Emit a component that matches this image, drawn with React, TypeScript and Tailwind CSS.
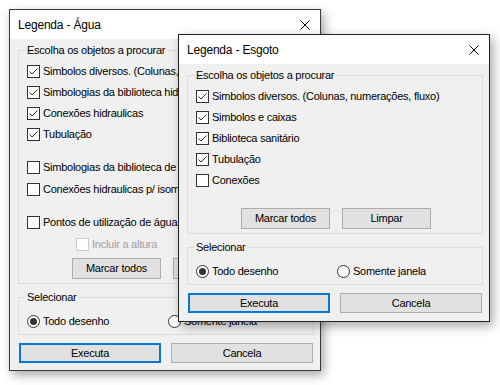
import type { ReactNode } from "react";

function CloseIcon() {
  return (
    <svg width="10" height="10" viewBox="0 0 10 10" className="block">
      <path d="M0.5 0.5 L9.5 9.5 M9.5 0.5 L0.5 9.5" stroke="#000" strokeWidth="1" fill="none" />
    </svg>
  );
}

function Check({
  label,
  checked = false,
  disabled = false,
}: {
  label: string;
  checked?: boolean;
  disabled?: boolean;
}) {
  return (
    <div className="flex h-[21px] items-center gap-[3px] whitespace-nowrap">
      <span
        className={`flex h-[13px] w-[13px] shrink-0 items-center justify-center border bg-white ${
          disabled ? "border-[#cccccc]" : "border-[#333333]"
        }`}
      >
        {checked && (
          <svg width="11" height="11" viewBox="0 0 11 11" className="block">
            <path d="M1.5 5.5 L4 8 L9.5 2.5" stroke="#333333" strokeWidth="1" fill="none" />
          </svg>
        )}
      </span>
      <span className={disabled ? "text-[#a0a0a0]" : "text-black"}>{label}</span>
    </div>
  );
}

function Radio({ label, checked = false }: { label: string; checked?: boolean }) {
  return (
    <div className="flex h-[21px] w-[141px] shrink-0 items-center gap-[3px] whitespace-nowrap">
      <span className="flex h-[13px] w-[13px] shrink-0 items-center justify-center rounded-full border border-[#333333] bg-white">
        {checked && <span className="h-[7px] w-[7px] rounded-full bg-[#333333]" />}
      </span>
      <span>{label}</span>
    </div>
  );
}

function Button({ children, primary = false }: { children: ReactNode; primary?: boolean }) {
  return (
    <button
      className={`flex h-[20px] w-[142px] items-center justify-center bg-[#e1e1e1] text-black ${
        primary ? "border-2 border-[#0078d7]" : "border border-[#adadad]"
      }`}
    >
      {children}
    </button>
  );
}

function SmallButton({ children }: { children: ReactNode }) {
  return (
    <button className="flex h-[21px] w-[89px] items-center justify-center border border-[#adadad] bg-[#e1e1e1] text-black">
      {children}
    </button>
  );
}

function GroupBox({
  label,
  className = "",
  children,
}: {
  label: string;
  className?: string;
  children: ReactNode;
}) {
  return (
    <fieldset className={`w-[296px] min-w-0 border border-[#dcdcdc] ${className}`}>
      <legend className="ml-[6px] px-[2px] leading-[13px]">{label}</legend>
      {children}
    </fieldset>
  );
}

function Dialog({
  title,
  className,
  children,
}: {
  title: string;
  className: string;
  children: ReactNode;
}) {
  return (
    <div
      className={`absolute flex w-[312px] flex-col overflow-hidden border bg-[#f0f0f0] text-[11px] tracking-[-0.25px] shadow-[3px_4px_10px_rgba(0,0,0,0.35)] ${className}`}
    >
      <div className="flex h-[29px] shrink-0 items-center justify-between bg-white pl-[8px] pr-[10px] text-[12px] tracking-[-0.2px] text-black">
        <span>{title}</span>
        <CloseIcon />
      </div>
      <div className="flex flex-col pl-[8px]">{children}</div>
    </div>
  );
}

function Footer() {
  return (
    <>
      <GroupBox label="Selecionar" className="mt-[7px] pt-[7px] pb-[2px]">
        <div className="flex pl-[8px]">
          <Radio label="Todo desenho" checked />
          <Radio label="Somente janela" />
        </div>
      </GroupBox>
      <div className="mt-[8px] flex gap-[10px] pl-[1px]">
        <Button primary>Executa</Button>
        <Button>Cancela</Button>
      </div>
    </>
  );
}

export default function App() {
  return (
    <div className="relative h-[385px] w-[500px] overflow-hidden bg-white font-['Liberation_Sans',Arial,sans-serif] text-black">
      <Dialog title="Legenda - Água" className="left-[9px] top-[9px] h-[362px] border-[#3a3a3a]">
        <GroupBox label="Escolha os objetos a procurar" className="mt-[5px] pt-[4px] pb-[4px]">
          <div className="flex flex-col pl-[8px]">
            <Check checked label="Simbolos diversos. (Colunas, numerações, fluxo)" />
            <Check checked label="Simbologias da biblioteca hidráulica" />
            <Check checked label="Conexões hidraulicas" />
            <Check checked label="Tubulação" />
            <div className="mt-[12px] flex flex-col gap-[1px]">
              <Check label="Simbologias da biblioteca de isométrico" />
              <Check label="Conexões hidraulicas p/ isométrico" />
            </div>
            <div className="mt-[12px] flex flex-col gap-[1px]">
              <Check label="Pontos de utilização de água" />
              <div className="pl-[49px]">
                <Check disabled label="Incluir a altura" />
              </div>
            </div>
          </div>
          <div className="mt-[3px] flex gap-[12px] pl-[53px]">
            <SmallButton>Marcar todos</SmallButton>
            <SmallButton>Limpar</SmallButton>
          </div>
        </GroupBox>
        <Footer />
      </Dialog>

      <Dialog title="Legenda - Esgoto" className="left-[178px] top-[34px] h-[288px] border-[#222222]">
        <GroupBox label="Escolha os objetos a procurar" className="mt-[5px] pt-[4px] pb-[4px]">
          <div className="flex flex-col pl-[8px]">
            <Check checked label="Simbolos diversos. (Colunas, numerações, fluxo)" />
            <Check checked label="Simbolos e caixas" />
            <Check checked label="Biblioteca sanitário" />
            <Check checked label="Tubulação" />
            <Check label="Conexões" />
          </div>
          <div className="mt-[17px] flex gap-[12px] pl-[53px]">
            <SmallButton>Marcar todos</SmallButton>
            <SmallButton>Limpar</SmallButton>
          </div>
        </GroupBox>
        <Footer />
      </Dialog>
    </div>
  );
}
